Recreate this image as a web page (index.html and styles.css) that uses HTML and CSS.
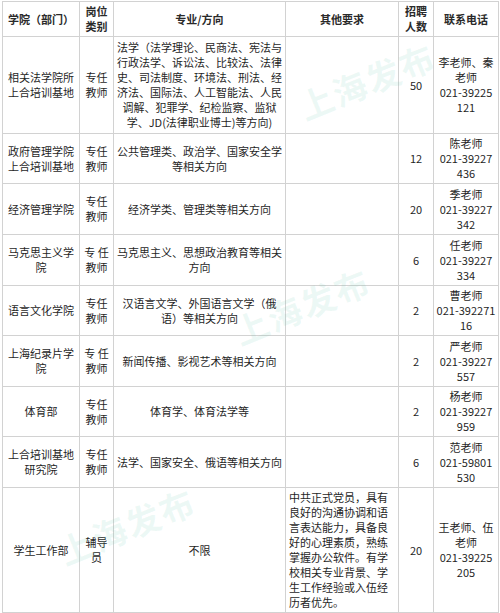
FILE: index.html
```html
<!DOCTYPE html>
<html lang="zh-CN">
<head>
<meta charset="utf-8">
<title>招聘岗位</title>
<link rel="stylesheet" href="styles.css">
</head>
<body>
<div class="page">
  <table class="jobs">
    <colgroup>
      <col class="c-dept"><col class="c-type"><col class="c-major"><col class="c-other"><col class="c-num"><col class="c-tel">
    </colgroup>
    <thead>
      <tr>
        <th>学院（部门）</th>
        <th>岗位<br>类别</th>
        <th>专业/方向</th>
        <th>其他要求</th>
        <th>招聘<br>人数</th>
        <th>联系电话</th>
      </tr>
    </thead>
    <tbody>
      <tr class="row-tall">
        <td>相关法学院所<br>上合培训基地</td>
        <td>专任<br>教师</td>
        <td>法学（法学理论、民商法、宪法与<br>行政法学、诉讼法、比较法、法律<br>史、司法制度、环境法、刑法、经<br>济法、国际法、人工智能法、人民<br>调解、犯罪学、纪检监察、监狱<br>学、JD(法律职业博士)等方向)</td>
        <td></td>
        <td>50</td>
        <td>李老师、秦<br>老师<br>021-39225<br>121</td>
      </tr>
      <tr>
        <td>政府管理学院<br>上合培训基地</td>
        <td>专任<br>教师</td>
        <td>公共管理类、政治学、国家安全学<br>等相关方向</td>
        <td></td>
        <td>12</td>
        <td>陈老师<br>021-39227<br>436</td>
      </tr>
      <tr class="h51">
        <td>经济管理学院</td>
        <td>专任<br>教师</td>
        <td>经济学类、管理类等相关方向</td>
        <td></td>
        <td>20</td>
        <td>季老师<br>021-39227<br>342</td>
      </tr>
      <tr class="h51">
        <td>马克思主义学<br>院</td>
        <td>专 任<br>教师</td>
        <td>马克思主义、思想政治教育等相关<br>方向</td>
        <td></td>
        <td>6</td>
        <td>任老师<br>021-39227<br>334</td>
      </tr>
      <tr>
        <td>语言文化学院</td>
        <td>专任<br>教师</td>
        <td>汉语言文学、外国语言文学（俄<br>语）等相关方向</td>
        <td></td>
        <td>2</td>
        <td>曹老师<br>021-392271<br>16</td>
      </tr>
      <tr class="h51">
        <td>上海纪录片学<br>院</td>
        <td>专 任<br>教师</td>
        <td>新闻传播、影视艺术等相关方向</td>
        <td></td>
        <td>2</td>
        <td>严老师<br>021-39227<br>557</td>
      </tr>
      <tr>
        <td>体育部</td>
        <td>专任<br>教师</td>
        <td>体育学、体育法学等</td>
        <td></td>
        <td>2</td>
        <td>杨老师<br>021-39227<br>959</td>
      </tr>
      <tr class="h51">
        <td>上合培训基地<br>研究院</td>
        <td>专任<br>教师</td>
        <td>法学、国家安全、俄语等相关方向</td>
        <td></td>
        <td>6</td>
        <td>范老师<br>021-59801<br>530</td>
      </tr>
      <tr>
        <td>学生工作部</td>
        <td>辅导<br>员</td>
        <td>不限</td>
        <td class="left">中共正式党员，具有<br>良好的沟通协调和语<br>言表达能力，具备良<br>好的心理素质，熟练<br>掌握办公软件。有学<br>校相关专业背景、学<br>生工作经验或入伍经<br>历者优先。</td>
        <td>20</td>
        <td>王老师、伍<br>老师<br>021-39225<br>205</td>
      </tr>
    </tbody>
  </table>
  <div class="wm wm-1">上海发布</div>
  <div class="wm wm-2">上海发布</div>
  <div class="wm wm-3">上海发布</div>
</div>
</body>
</html>
```
FILE: styles.css
```css
html, body {
  margin: 0;
  padding: 0;
  background: #ffffff;
}

.page {
  position: relative;
  width: 500px;
  height: 613px;
  overflow: hidden;
  padding: 1px 3px 0 2px;
  box-sizing: border-box;
  font-family: "Noto Sans CJK SC", "Noto Sans", sans-serif;
  font-size: 11px;
  line-height: 15px;
  color: #1f1f1f;
}

.jobs {
  width: 496px;
  table-layout: fixed;
  border-collapse: collapse;
}

.c-dept { width: 77px; }
.c-type { width: 34px; }
.c-major { width: 172px; }
.c-other { width: 113px; }
.c-num { width: 35px; }
.c-tel { width: 65px; }

.jobs th,
.jobs td {
  border: 1px solid #d2d2d2;
  padding: 2px 1px;
  text-align: center;
  vertical-align: middle;
  white-space: nowrap;
  overflow: visible;
}

.jobs th {
  font-weight: 700;
  color: #2a2a2a;
}

.jobs td.left {
  text-align: left;
  padding-left: 3px;
}

.row-tall {
  height: 97px;
}

.h51 {
  height: 51px;
}

.wm {
  position: absolute;
  font-family: "Noto Sans CJK SC", sans-serif;
  font-weight: 700;
  font-size: 34px;
  letter-spacing: 2px;
  color: rgba(110, 200, 175, 0.12);
  transform: rotate(-22deg);
  transform-origin: left center;
  pointer-events: none;
  white-space: nowrap;
}

.wm-1 { left: 300px; top: 100px; }
.wm-2 { left: 235px; top: 325px; }
.wm-3 { left: 60px; top: 545px; }
```
